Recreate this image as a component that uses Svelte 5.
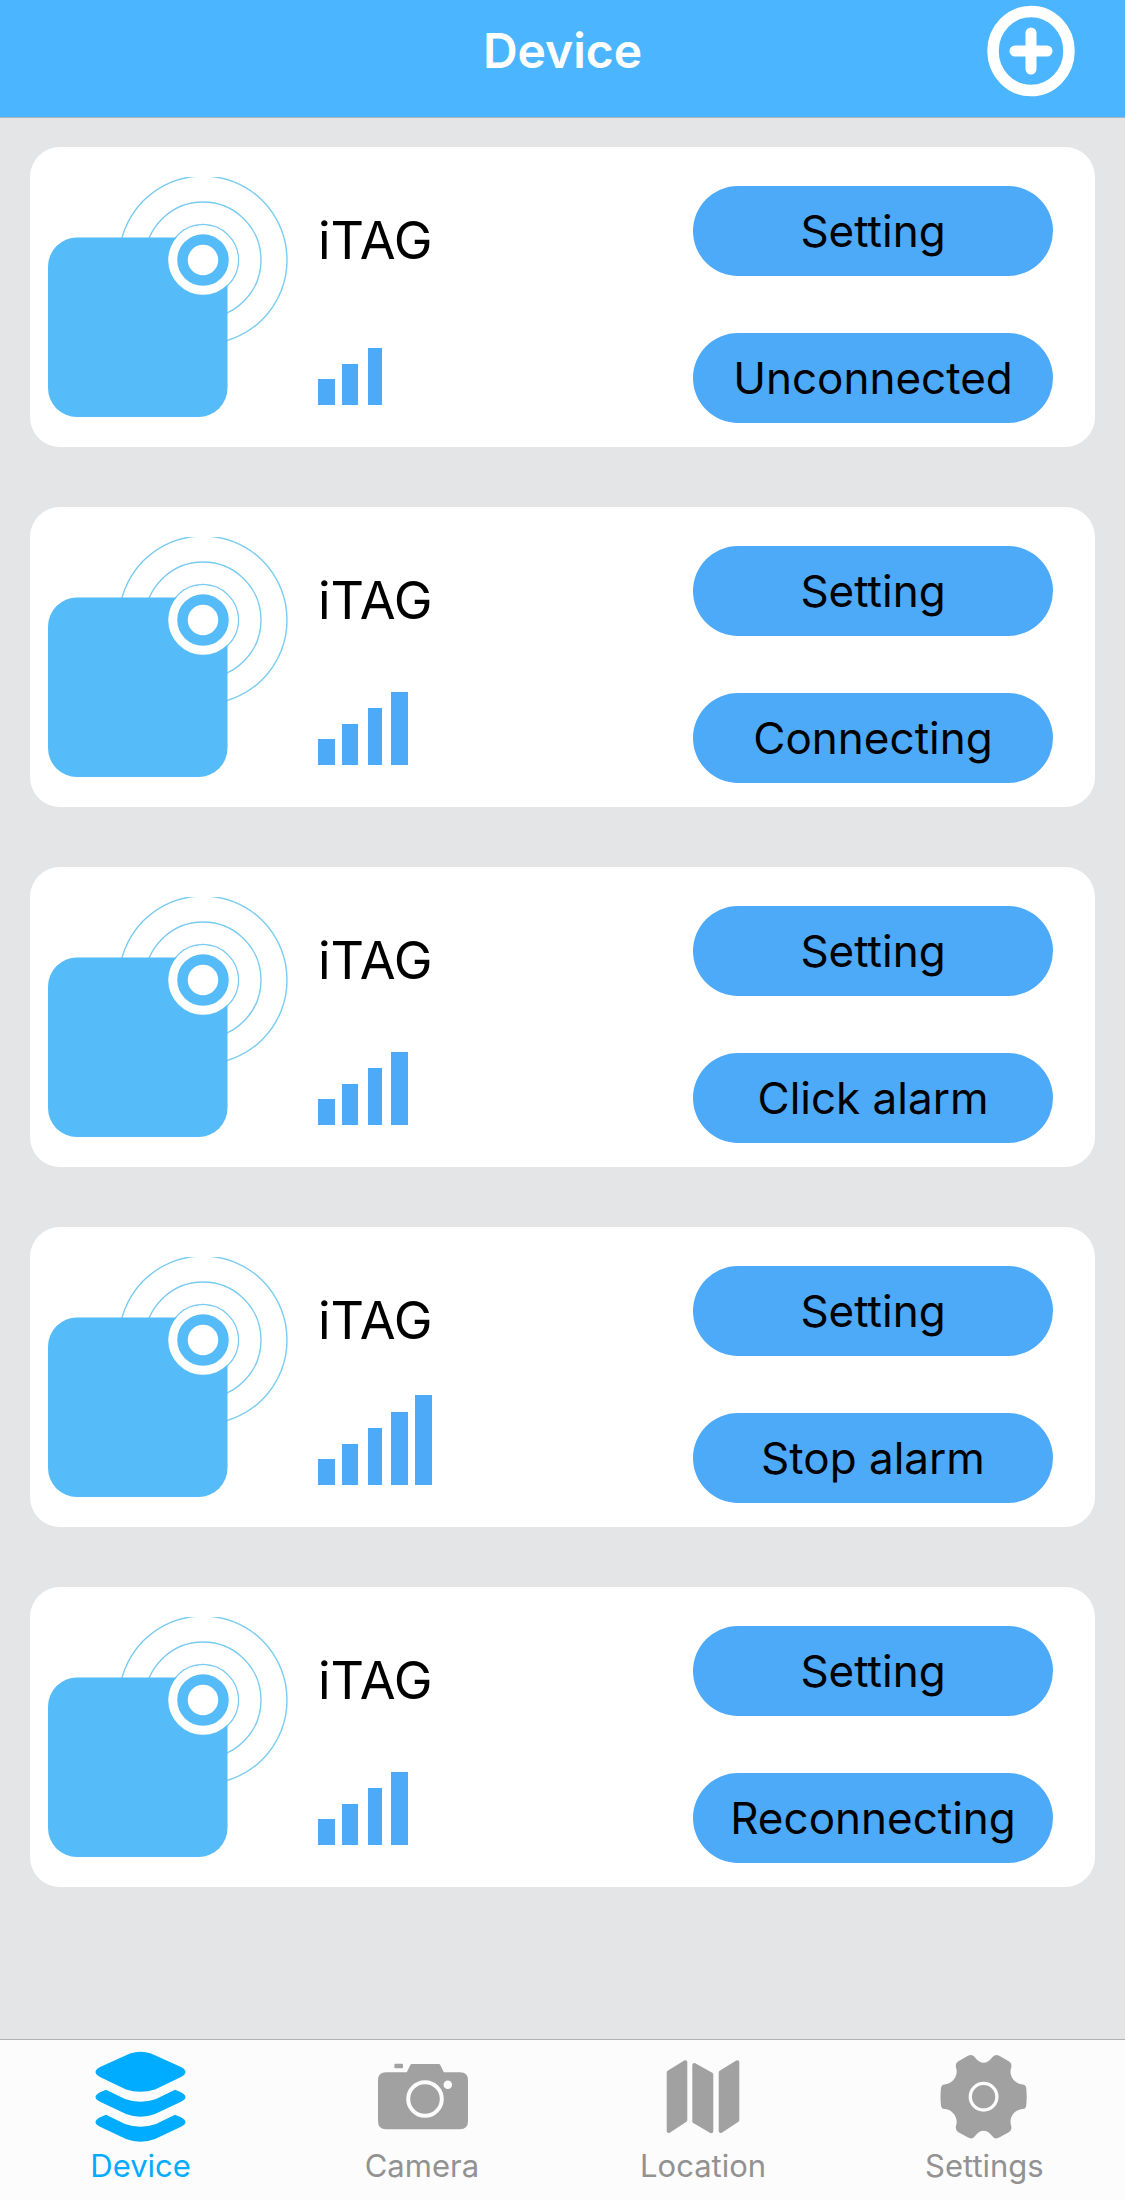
<script>
    const barShapes = [
        { x: 0, width: 17, height: 26 },
        { x: 24, width: 16, height: 41 },
        { x: 50, width: 14, height: 57 },
        { x: 73, width: 17, height: 73 },
        { x: 97, width: 17, height: 90 }
    ];

    let devices = [
        { name: 'iTAG', signal: 3, status: 'Unconnected' },
        { name: 'iTAG', signal: 4, status: 'Connecting' },
        { name: 'iTAG', signal: 4, status: 'Click alarm' },
        { name: 'iTAG', signal: 5, status: 'Stop alarm' },
        { name: 'iTAG', signal: 4, status: 'Reconnecting' }
    ];

    const tabs = ['Device', 'Camera', 'Location', 'Settings'];
    let activeTab = 'Device';
</script>

<div class="app">
    <header class="top-bar">
        <h1>Device</h1>
        <button class="add-btn" aria-label="Add device">
            <svg width="88" height="92" viewBox="0 0 88 92">
                <ellipse cx="44" cy="46" rx="38" ry="39.5" fill="none" stroke="#fff" stroke-width="11.5" />
                <path d="M44 28v36M28 46h32" stroke="#fff" stroke-width="11" stroke-linecap="round" />
            </svg>
        </button>
    </header>

    <main class="device-list">
        {#each devices as device}
            <article class="card">
                <svg class="tag-icon" width="240" height="240" viewBox="0 0 240 240">
                    <g fill="none" stroke="#7acbf2" stroke-width="1.4">
                        <circle cx="155" cy="83" r="84" />
                        <circle cx="155" cy="83" r="58" />
                        <circle cx="155" cy="83" r="35.5" />
                    </g>
                    <rect x="0" y="60.5" width="179.5" height="179.5" rx="29" fill="#55bbf9" />
                    <circle cx="155" cy="83" r="34.8" fill="#fff" />
                    <circle cx="155" cy="83" r="20.5" fill="#fff" stroke="#55bbf9" stroke-width="10.5" />
                </svg>

                <div class="info">
                    <h2>{device.name}</h2>
                    <svg width="114" height="90" viewBox="0 0 114 90" role="img" aria-label="Signal {device.signal} of 5">
                        {#each barShapes.slice(0, device.signal) as bar}
                            <rect x={bar.x} y={90 - bar.height} width={bar.width} height={bar.height} fill="#4daaf9" />
                        {/each}
                    </svg>
                </div>

                <div class="actions">
                    <button>Setting</button>
                    <button>{device.status}</button>
                </div>
            </article>
        {/each}
    </main>

    <nav class="tab-bar">
        {#each tabs as tab}
            <button class:active={tab === activeTab} on:click={() => activeTab = tab}>
                <svg width="96" height="98" viewBox="0 0 96 98" fill="currentColor">
                    {#if tab === 'Device'}
                        <path d="M37 3.5q10.500-3.500 21 0L88 17q9 5 0 10L62 39.500q-14.500 4.500-29 0L7 27q-9-5 0-10z" />
                        <path d="M13 39.700L32 49q15.500 5.500 31 0l19-9.300 6 2.500q9 5 0 9.600L62 64q-14.500 5.500-29 0L7 51.800q-9-4.600 0-9.600z" />
                        <path d="M13 64.700L32 74q15.500 5.500 31 0l19-9.300 6 2.500q9 5 0 9.600L62 89q-14.500 5.500-29 0L7 76.800q-9-4.600 0-9.600z" />
                    {:else if tab === 'Camera'}
                        <rect x="20.4" y="13.7" width="8.6" height="4.5" rx="1" />
                        <path d="M12 22.300h20.800l3.500-7.300q.5-1 1.500-1h27q1 0 1.500 1l3.500 7.300H86q8 0 8 8v41q0 8-8 8H12q-8 0-8-8v-41q0-8 8-8z" />
                        <circle cx="51" cy="49" r="16.8" fill="none" stroke="#fcfcfc" stroke-width="4" />
                        <circle cx="73.8" cy="34.7" r="4.3" fill="#fcfcfc" />
                    {:else if tab === 'Location'}
                        <g stroke="currentColor" stroke-width="4" stroke-linejoin="round">
                            <path d="M13.7 22.5L30.3 12.3V70L13.7 81z" />
                            <path d="M39.3 15L56.3 24.5V81.3L39.3 71.3z" />
                            <path d="M65.7 22.5L82.3 12.3V70L65.7 81z" />
                        </g>
                    {:else}
                        <path d="M47.6 12.7Q43 12.7 39.5 8Q36.5 3.5 32 5.8L22 11.5Q19 13.5 20 17.5C23 26 16 34.3 8.5 34.5Q5.5 34.5 5 38Q4 46.7 5 55.4Q5.5 58.9 8.5 58.9C16 59.1 23 67.4 20 75.9Q19 79.9 22 81.9L32 87.6Q36.5 89.9 39.5 85.4Q43 80.7 47.6 80.7Q52.2 80.7 55.7 85.4Q58.7 89.9 63.2 87.6L73.2 81.9Q76.2 79.9 75.2 75.9C72.2 67.4 79.2 59.1 86.7 58.9Q89.7 58.9 90.2 55.4Q91.2 46.7 90.2 38Q89.7 34.5 86.7 34.5C79.2 34.3 72.2 26 75.2 17.5Q76.2 13.5 73.2 11.5L63.2 5.8Q58.7 3.5 55.7 8Q52.2 12.7 47.6 12.7z" />
                        <circle cx="47.6" cy="46.7" r="13.3" fill="none" stroke="#fcfcfc" stroke-width="3.3" />
                    {/if}
                </svg>
                <span>{tab}</span>
            </button>
        {/each}
    </nav>
</div>

<style>
    :global(body) {
        margin: 0;
        background: #e4e5e7;
    }

    .app {
        display: flex;
        flex-direction: column;
        min-height: 100vh;
        font-family: Inter, Roboto, sans-serif;
        color: #000;
    }

    button {
        padding: 0;
        border: none;
        font: inherit;
        color: inherit;
        cursor: pointer;
    }

    /* Top bar */
    .top-bar {
        display: grid;
        grid-template-columns: 1fr auto 1fr;
        align-items: center;
        box-sizing: border-box;
        height: 118px;
        padding: 0 50px 16px;
        background: #4bb6ff;
        border-bottom: 1px solid #adb3b8;
    }

    h1 {
        grid-column: 2;
        margin: 0;
        color: #fff;
        font-size: 48px;
        font-weight: 600;
        line-height: 60px;
    }

    .add-btn {
        display: flex;
        justify-self: end;
        background: none;
    }

    /* Device cards */
    .device-list {
        display: flex;
        flex: 1;
        flex-direction: column;
        gap: 60px;
        padding: 29px 30px;
    }

    .card {
        display: flex;
        box-sizing: border-box;
        height: 300px;
        padding: 30px 42px 30px 18px;
        background: #fff;
        border-radius: 30px;
    }

    .info {
        display: flex;
        flex: 1;
        flex-direction: column;
        justify-content: space-between;
        padding: 34px 0 12px 30px;
    }

    h2 {
        margin: 0;
        font-size: 52px;
        font-weight: 400;
        line-height: 60px;
    }

    .actions {
        display: flex;
        flex-direction: column;
        gap: 57px;
        width: 360px;
        padding-top: 9px;
    }

    .actions button {
        flex-shrink: 0;
        height: 90px;
        background: #4daaf9;
        border-radius: 45px;
        font-size: 44px;
    }

    /* Tab bar */
    .tab-bar {
        display: grid;
        grid-template-columns: repeat(4, 1fr);
        box-sizing: border-box;
        height: 161px;
        background: #fcfcfc;
        border-top: 1px solid #b0b1b4;
    }

    .tab-bar button {
        display: flex;
        flex-direction: column;
        align-items: center;
        padding-top: 10px;
        background: none;
        color: #a1a1a1;
    }

    .tab-bar span {
        color: #929292;
        font-size: 31px;
        font-weight: 400;
        line-height: 36px;
    }

    .tab-bar .active,
    .tab-bar .active span {
        color: #00acff;
    }
</style>
